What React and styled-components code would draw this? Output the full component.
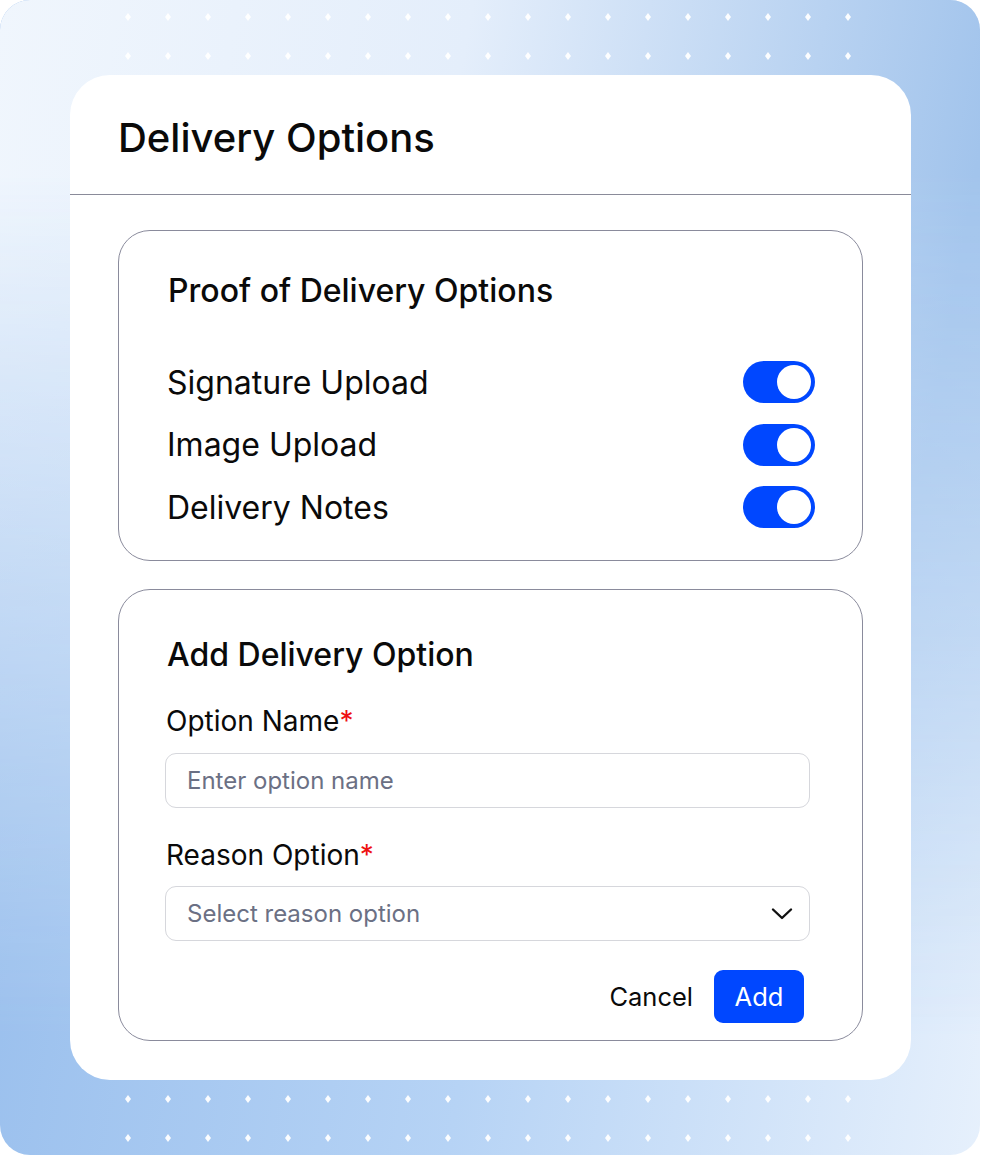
import React from "react";
import styled, { createGlobalStyle } from "styled-components";

const Global = createGlobalStyle`
  html, body { margin: 0; padding: 0; background: #ffffff; }
  body { font-family: Inter, "Noto Sans", sans-serif; color: #0a0a0a; }
  * { box-sizing: border-box; }
`;

const Backdrop = styled.div`
  position: relative;
  width: 980px;
  height: 1155px;
  border-radius: 30px;
  overflow: hidden;
  background: linear-gradient(100deg, #92baeb 0%, #b6d3f5 55%, #e6f0fc 100%);
  display: flex;
  flex-direction: column;
  padding: 13px 0 0 0;
  &::before {
    content: "";
    position: absolute;
    inset: 0;
    background: linear-gradient(100deg, #f0f6fd 0%, #e4eefb 40%, #a2c4ec 85%, #a0c3ec 100%);
    -webkit-mask-image: linear-gradient(to bottom, #000 0%, #000 15%, transparent 90%);
    mask-image: linear-gradient(to bottom, #000 0%, #000 15%, transparent 90%);
  }
  & > * { position: relative; }
`;

const DotBand = styled.div`
  display: flex;
  flex-direction: column;
  gap: 31px;
  padding-left: 125px;
`;

const DotRow = styled.div`
  display: flex;
  gap: 34px;
  height: 8px;
`;

const Dot = styled.span`
  width: 6px;
  height: 8px;
  background: #ffffff;
  clip-path: polygon(50% 0, 100% 50%, 50% 100%, 0 50%);
  opacity: 0.95;
`;

const Card = styled.div`
  margin: 15px 0 15px 70px;
  width: 841px;
  height: 1005px;
  background: #ffffff;
  border-radius: 40px;
  display: flex;
  flex-direction: column;
`;

const Header = styled.div`
  height: 120px;
  padding: 0 0 0 48px;
  display: flex;
  align-items: center;
  border-bottom: 1px solid #8a8b99;
`;

const HeaderTitle = styled.h1`
  margin: 0;
  font-size: 40px;
  font-weight: 500;
  padding-top: 6px;
`;

const Body = styled.div`
  padding: 35px 48px 0 48px;
  display: flex;
  flex-direction: column;
  gap: 28px;
`;

const Section = styled.section`
  border: 1px solid #8a8b9c;
  border-radius: 32px;
  padding: ${(p) => p.$pad};
  display: flex;
  flex-direction: column;
`;

const SectionTitle = styled.h2`
  margin: 0 0 ${(p) => p.$mb}px 0;
  font-size: 32px;
  font-weight: 500;
  line-height: 38px;
  padding-left: ${(p) => p.$pl || 0}px;
`;

const ToggleList = styled.div`
  display: flex;
  flex-direction: column;
  gap: 20.5px;
`;

const ToggleRow = styled.div`
  display: flex;
  align-items: center;
  justify-content: space-between;
  height: 42px;
`;

const RowLabel = styled.span`
  font-size: 32px;
  font-weight: 400;
`;

const Track = styled.button`
  width: 72px;
  height: 42px;
  border-radius: 21px;
  border: none;
  background: #0047ff;
  padding: 4px;
  display: flex;
  justify-content: ${(p) => (p.$on ? "flex-end" : "flex-start")};
  cursor: pointer;
`;

const Thumb = styled.span`
  width: 34px;
  height: 34px;
  border-radius: 50%;
  background: #ffffff;
`;

const Field = styled.div`
  display: flex;
  flex-direction: column;
  gap: ${(p) => p.$gap}px;
  margin-bottom: ${(p) => p.$mb}px;
`;

const Label = styled.label`
  font-size: 28px;
  line-height: 34px;
  font-weight: 400;
  padding-left: 1px;
`;

const Req = styled.span`
  color: #ee1111;
`;

const InputBox = styled.div`
  height: 55px;
  border: 1.5px solid #d6d7dc;
  border-radius: 11px;
  display: flex;
  align-items: center;
  justify-content: space-between;
  padding: 0 16px 0 21px;
  font-size: 24px;
  color: #6b7084;
`;

const Actions = styled.div`
  display: flex;
  justify-content: flex-end;
  align-items: center;
  gap: 21px;
  padding-right: 6px;
`;

const CancelBtn = styled.button`
  background: none;
  border: none;
  font-family: inherit;
  font-size: 25.5px;
  color: #0a0a0a;
  padding: 0;
  cursor: pointer;
`;

const AddBtn = styled.button`
  width: 90px;
  height: 53px;
  border: none;
  border-radius: 9px;
  background: #0047ff;
  color: #ffffff;
  font-family: inherit;
  font-size: 25.5px;
  cursor: pointer;
`;

const Chevron = () => (
  <svg width="22" height="14" viewBox="0 0 22 14" fill="none">
    <path d="M2 2.5 L11 11 L20 2.5" stroke="#111" strokeWidth="2.4" strokeLinecap="round" strokeLinejoin="round" />
  </svg>
);

const dots = Array.from({ length: 19 });

const Dots = () => (
  <DotBand>
    {[0, 1].map((r) => (
      <DotRow key={r}>
        {dots.map((_, i) => (
          <Dot key={i} />
        ))}
      </DotRow>
    ))}
  </DotBand>
);

const toggles = ["Signature Upload", "Image Upload", "Delivery Notes"];

export default function App() {
  return (
    <>
      <Global />
      <Backdrop>
        <Dots />
        <Card>
          <Header>
            <HeaderTitle>Delivery Options</HeaderTitle>
          </Header>
          <Body>
            <Section $pad="41px 47px 32px 48px">
              <SectionTitle $mb={51} $pl={1}>Proof of Delivery Options</SectionTitle>
              <ToggleList>
                {toggles.map((t) => (
                  <ToggleRow key={t}>
                    <RowLabel>{t}</RowLabel>
                    <Track $on aria-label={t}>
                      <Thumb />
                    </Track>
                  </ToggleRow>
                ))}
              </ToggleList>
            </Section>
            <Section $pad="46px 52px 17px 46px">
              <SectionTitle $mb={30} $pl={2}>Add Delivery Option</SectionTitle>
              <Field $mb={30} $gap={15}>
                <Label>
                  Option Name<Req>*</Req>
                </Label>
                <InputBox>Enter option name</InputBox>
              </Field>
              <Field $mb={29} $gap={14}>
                <Label>
                  Reason Option<Req>*</Req>
                </Label>
                <InputBox>
                  Select reason option
                  <Chevron />
                </InputBox>
              </Field>
              <Actions>
                <CancelBtn>Cancel</CancelBtn>
                <AddBtn>Add</AddBtn>
              </Actions>
            </Section>
          </Body>
        </Card>
        <Dots />
      </Backdrop>
    </>
  );
}
